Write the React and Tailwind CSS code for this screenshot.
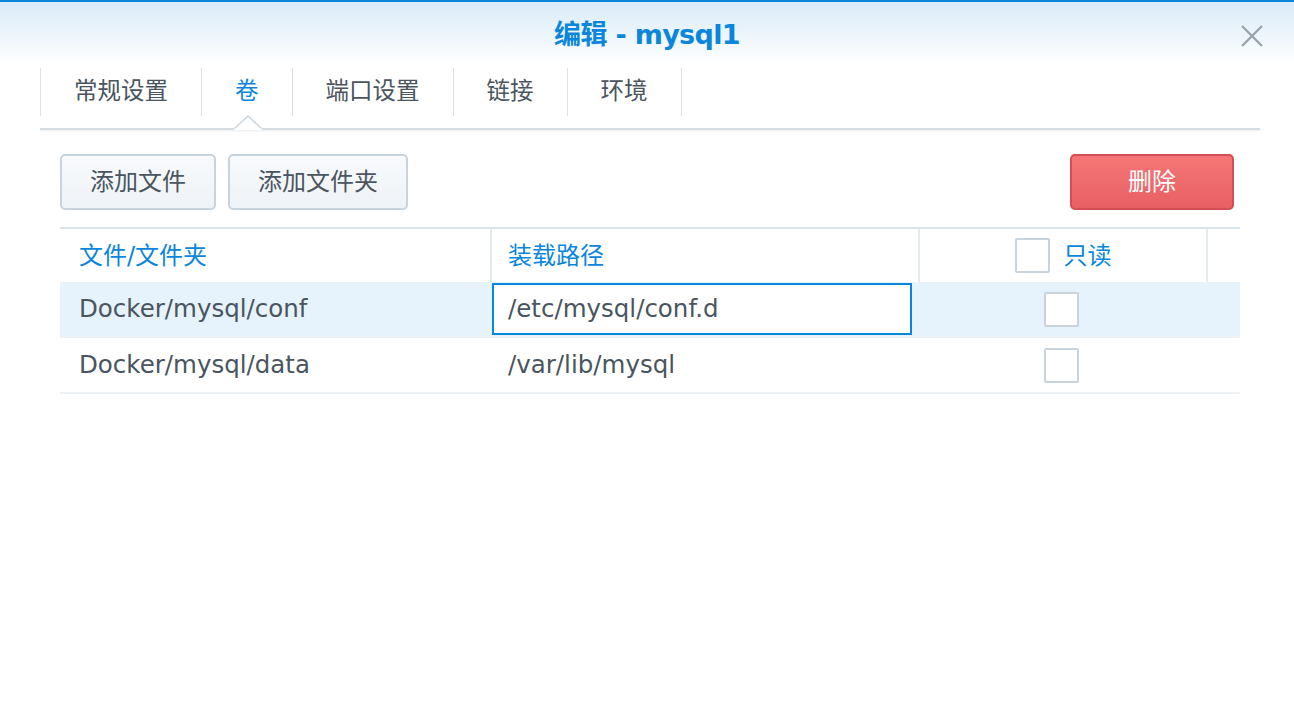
import React from 'react'

const font = { fontFamily: '"DejaVu Sans", "Noto Sans CJK SC", sans-serif' }

function Checkbox() {
  return <div className="w-[35px] h-[35px] border-2 border-[#c9d3dc] bg-white rounded-[2px]" />
}

export default function App() {
  const tabs = ['常规设置', '卷', '端口设置', '链接', '环境']
  const rows = [
    { src: 'Docker/mysql/conf', dst: '/etc/mysql/conf.d', active: true },
    { src: 'Docker/mysql/data', dst: '/var/lib/mysql', active: false },
  ]

  return (
    <div className="w-[1294px] h-[702px] bg-white overflow-hidden" style={font}>
      {/* header */}
      <div className="h-[64px] border-t-2 border-[#0a86dc] bg-gradient-to-b from-[#d9ebf8] to-white relative flex items-center justify-center">
        <h1 className="text-[27px] font-bold text-[#0a86dc] tracking-tight pt-[4px]">编辑 - mysql1</h1>
        <svg className="absolute right-[30px] top-[22px]" width="24" height="24" viewBox="0 0 24 24">
          <path d="M2 2 L22 22 M22 2 L2 22" stroke="#9aa3ab" strokeWidth="2.4" />
        </svg>
      </div>

      {/* tabs */}
      <div className="pl-[40px] pr-[34px]">
        <div className="flex h-[64px] relative">
          <div className="w-px bg-[#d9e1e7] mt-[4px] mb-[12px]" />
          {tabs.map((t, i) => (
            <React.Fragment key={t}>
              <div className={`px-[33px] flex items-center pb-[8px] text-[23.5px] ${i === 1 ? 'text-[#0a86dc]' : 'text-[#4a5560]'}`}>{t}</div>
              <div className="w-px bg-[#d9e1e7] mt-[4px] mb-[12px]" />
            </React.Fragment>
          ))}
          {/* notch */}
          <svg className="absolute left-[194px] bottom-[-2px]" width="28" height="16" viewBox="0 0 28 16">
            <path d="M0 15 L14 2 L28 15" fill="white" stroke="#cdd5dc" strokeWidth="1.5" />
            <rect x="0" y="14.5" width="28" height="2" fill="white" />
          </svg>
        </div>
        <div className="h-[2px] bg-[#d5dce2] shadow-[0_1px_2px_rgba(0,0,0,0.08)]" />
      </div>

      {/* toolbar */}
      <div className="pl-[60px] pr-[60px] pt-[24px] flex items-center">
        <button className="h-[56px] w-[156px] rounded-[5px] border-2 border-[#c9d3dc] bg-gradient-to-b from-[#f8fafc] to-[#eef3f7] text-[24px] text-[#4a5560]">添加文件</button>
        <button className="ml-[12px] h-[56px] w-[180px] rounded-[5px] border-2 border-[#c9d3dc] bg-gradient-to-b from-[#f8fafc] to-[#eef3f7] text-[24px] text-[#4a5560]">添加文件夹</button>
        <div className="flex-1" />
        <button className="h-[56px] w-[164px] rounded-[5px] border-2 border-[#d24f55] bg-gradient-to-b from-[#f57676] to-[#e85f63] text-[24px] text-white">删除</button>
      </div>

      {/* table */}
      <div className="ml-[60px] mr-[54px] mt-[17px] border-t-2 border-[#d9e3ea]">
        <div className="flex h-[53px] text-[24px] text-[#0a86dc]">
          <div className="w-[432px] flex items-center pl-[19px] border-r-2 border-[#e2eaf0]">文件/文件夹</div>
          <div className="w-[428px] flex items-center pl-[16px] border-r-2 border-[#e2eaf0]">装载路径</div>
          <div className="w-[288px] flex items-center justify-center gap-[14px] border-r-2 border-[#e2eaf0]">
            <Checkbox />
            <span>只读</span>
          </div>
          <div className="flex-1" />
        </div>
        {rows.map((r) => (
          <div key={r.src} className={`flex h-[56px] text-[24.5px] text-[#4a5560] border-b-2 border-[#edf1f4] ${r.active ? 'bg-[#e6f3fc]' : ''}`}>
            <div className="w-[432px] flex items-center pl-[19px]">{r.src}</div>
            <div className="w-[428px] flex items-center pr-[8px] py-[1px]">
              {r.active ? (
                <div className="w-full h-full bg-white border-2 border-[#0a86dc] flex items-center pl-[14px]">{r.dst}</div>
              ) : (
                <div className="pl-[16px]">{r.dst}</div>
              )}
            </div>
            <div className="w-[288px] flex items-center justify-center pr-[6px]">
              <Checkbox />
            </div>
            <div className="flex-1" />
          </div>
        ))}
      </div>
    </div>
  )
}
